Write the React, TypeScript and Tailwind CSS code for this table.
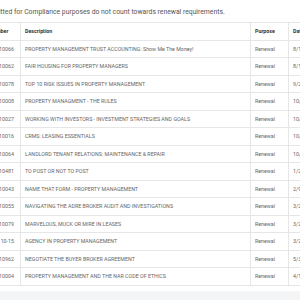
const rows = [
  ["10066", "PROPERTY MANAGEMENT TRUST ACCOUNTING: Show Me The Money!", "8/14/2019"],
  ["10062", "FAIR HOUSING FOR PROPERTY MANAGERS", "8/15/2019"],
  ["10078", "TOP 10 RISK ISSUES IN PROPERTY MANAGEMENT", "9/24/2019"],
  ["10008", "PROPERTY MANAGMENT - THE RULES", "10/2/2019"],
  ["10027", "WORKING WITH INVESTORS - INVESTMENT STRATEGIES AND GOALS", "10/8/2019"],
  ["10016", "CRMS: LEASING ESSENTIALS", "10/9/2019"],
  ["10064", "LANDLORD TENANT RELATIONS: MAINTENANCE & REPAIR", "10/16/2019"],
  ["10481", "TO POST OR NOT TO POST", "1/22/2020"],
  ["10043", "NAME THAT FORM - PROPERTY MANAGEMENT", "2/9/2020"],
  ["10055", "NAVIGATING THE ADRE BROKER AUDIT AND INVESTIGATIONS", "3/2/2020"],
  ["10079", "MARVELOUS, MUCK OR MIRE IN LEASES", "3/2/2020"],
  ["10-15", "AGENCY IN PROPERTY MANAGEMENT", "3/2/2020"],
  ["10962", "NEGOTIATE THE BUYER BROKER AGREEMENT", "5/3/2020"],
  ["10004", "PROPERTY MANAGEMENT AND THE NAR CODE OF ETHICS", "4/1/2020"],
];

export default function App() {
  return (
    <div className="h-[300px] w-[300px] overflow-hidden bg-[#f4f5f7] font-['Roboto',sans-serif]">
      <div className="-ml-[34.5px] w-[420px] bg-white pb-[5px] pt-[8px]">
        <p className="-ml-[10.5px] h-[14px] whitespace-nowrap text-[6.8px] leading-[8px] text-[#555]">
          Courses submitted for Compliance purposes do not count towards renewal requirements.
        </p>
        <table className="w-[396px] table-fixed border-collapse text-[5.3px] leading-[8px]">
          <colgroup>
            <col className="w-[54px]" />
            <col className="w-[230px]" />
            <col className="w-[38px]" />
            <col className="w-[74px]" />
          </colgroup>
          <thead>
            <tr className="h-[17.5px]">
              {["Course Number", "Description", "Purpose", "Date"].map((h) => (
                <th
                  key={h}
                  className="whitespace-nowrap border border-[#e6e6e6] px-[4.5px] text-left font-bold text-[#333]"
                >
                  {h}
                </th>
              ))}
            </tr>
          </thead>
          <tbody>
            {rows.map(([num, desc, date]) => (
              <tr key={num + desc} className="h-[17.5px] text-[#666]">
                <td className="whitespace-nowrap border border-[#e6e6e6] pl-[4.5px] pr-[5.5px] text-right">{num}</td>
                <td className="whitespace-nowrap border border-[#e6e6e6] px-[4.5px]">{desc}</td>
                <td className="whitespace-nowrap border border-[#e6e6e6] px-[4.5px]">Renewal</td>
                <td className="whitespace-nowrap border border-[#e6e6e6] px-[4.5px]">{date}</td>
              </tr>
            ))}
          </tbody>
        </table>
      </div>
    </div>
  );
}
